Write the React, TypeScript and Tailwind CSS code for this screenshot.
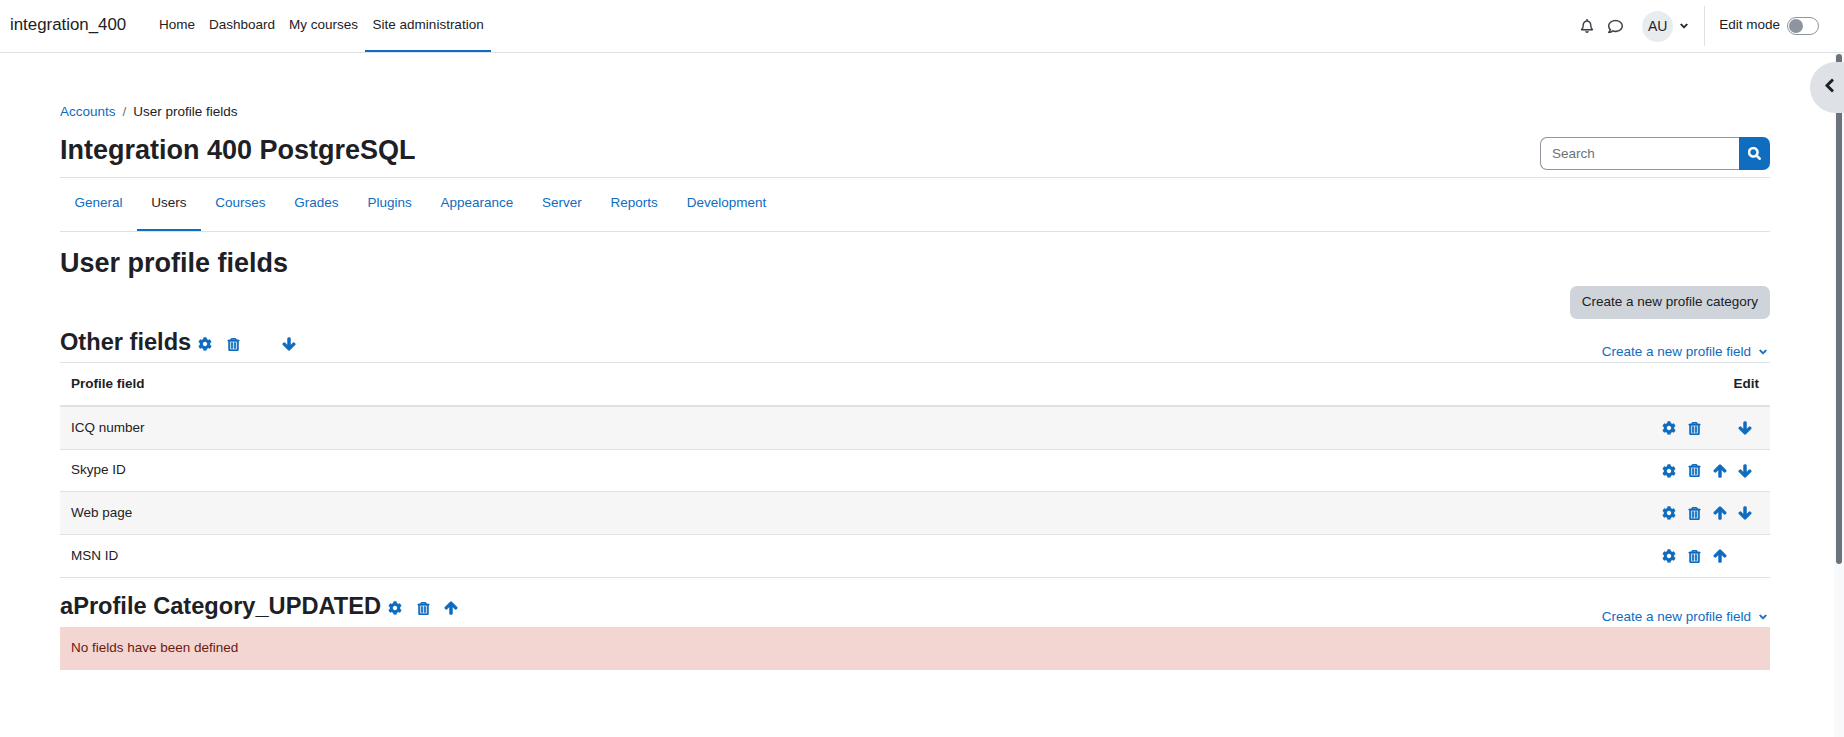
import { FaCog, FaRegTrashAlt, FaArrowUp, FaArrowDown, FaSearch, FaRegBell, FaRegComment, FaChevronDown, FaChevronLeft } from "react-icons/fa";

type Move = "up" | "down" | null;

const Gear = () => <FaCog className="text-[14px]" />;
const Trash = () => <FaRegTrashAlt className="text-[13px]" strokeWidth={30} />;
const Up = () => <FaArrowUp className="text-[14px]" strokeWidth={45} />;
const Down = () => <FaArrowDown className="text-[14px]" strokeWidth={45} />;

function ActionIcons({ up, down }: { up: boolean; down: boolean }) {
  return (
    <div className="flex items-center text-[#0f6cbf]">
      <span className="w-[25.5px] flex justify-center"><Gear /></span>
      <span className="w-[25.5px] flex justify-center"><Trash /></span>
      <span className="w-[25.5px] flex justify-center">{up ? <Up /> : null}</span>
      <span className="w-[25.5px] flex justify-center">{down ? <Down /> : null}</span>
    </div>
  );
}

function HeadIcons({ moves }: { moves: Move[] }) {
  return (
    <div className="flex items-center text-[#0f6cbf] mt-[4px]">
      <span className="w-[28px] flex justify-center"><Gear /></span>
      <span className="w-[28px] flex justify-center"><Trash /></span>
      {moves.map((m, i) => (
        <span key={i} className="w-[28px] flex justify-center">
          {m === "up" ? <Up /> : m === "down" ? <Down /> : null}
        </span>
      ))}
    </div>
  );
}

function Row({ name, up, down, shaded, h }: { name: string; up: boolean; down: boolean; shaded: boolean; h: string }) {
  return (
    <div className={`flex items-center justify-between border-b border-[#dee2e6] pl-[11px] pr-[12px] ${h} ${shaded ? "bg-[#f6f6f7]" : "bg-white"}`}>
      <span>{name}</span>
      <ActionIcons up={up} down={down} />
    </div>
  );
}

function CreateField() {
  return (
    <div className="flex items-center gap-[8px] text-[#0f6cbf] pr-[3px] leading-[20px]">
      <span>Create a new profile field</span>
      <FaChevronDown className="text-[8px]" strokeWidth={50} />
    </div>
  );
}

const nav = ["Home", "Dashboard", "My courses"];
const tabs = ["General", "Users", "Courses", "Grades", "Plugins", "Appearance", "Server", "Reports", "Development"];

export default function App() {
  return (
    <div className="relative h-[737px] w-[1844px] overflow-hidden bg-white text-[13.5px] text-[#1d2125] font-['Liberation_Sans',Arial,sans-serif] flex flex-col">
      <header className="h-[53px] shrink-0 border-b border-[#dee2e6] flex items-center pl-[10px] pr-[25px]">
        <span className="text-[16.875px] w-[142px] mb-[2px]">integration_400</span>
        <nav className="flex h-full">
          {nav.map((n) => (
            <span key={n} className="px-[7px] flex items-center h-full border-b-2 border-transparent">{n}</span>
          ))}
          <span className="px-[7.5px] flex items-center h-full border-b-2 border-[#0f6cbf]">Site administration</span>
        </nav>
        <div className="ml-auto flex items-center h-full">
          <FaRegBell className="text-[14px] text-[#3d4249]" strokeWidth={5} />
          <FaRegComment className="text-[15px] text-[#3d4249] ml-[14px]" strokeWidth={5} />
          <span className="ml-[19px] w-[31px] h-[31px] rounded-full bg-[#e9ecef] flex items-center justify-center text-[14px]">AU</span>
          <FaChevronDown className="text-[8px] ml-[7px]" strokeWidth={50} />
          <span className="ml-[16px] w-px h-[40px] bg-[#dee2e6]" />
          <span className="ml-[14px] mb-[1px]">Edit mode</span>
          <span className="ml-[7px] w-[32px] h-[18px] rounded-full border border-[#8f959e] bg-white flex items-center pl-[1px]">
            <span className="w-[14px] h-[14px] rounded-full bg-[#8f959e]" />
          </span>
        </div>
      </header>

      <div className="flex flex-1 min-h-0">
        <main className="flex-1 pl-[60px] pr-[64px] pt-[49px]">
          <div className="flex items-center gap-[7px] h-[20px]">
            <span className="text-[#0f6cbf]">Accounts</span>
            <span className="text-[#6a737b]">/</span>
            <span>User profile fields</span>
          </div>
          <div className="flex items-end justify-between h-[57px] border-b border-[#dee2e6] pb-[7px] mt-[-1px]">
            <h1 className="text-[27px] font-bold leading-[34px] mb-[3px]">Integration 400 PostgreSQL</h1>
            <div className="flex h-[33px] w-[230px]">
              <div className="flex-1 border border-[#8f959e] rounded-l-[7px] border-r-0 pl-[11px] pt-[1px] flex items-center text-[#6a737b]">Search</div>
              <div className="w-[31px] bg-[#0f6cbf] rounded-r-[7px] flex items-center justify-center text-white text-[13px]"><FaSearch strokeWidth={20} /></div>
            </div>
          </div>
          <div className="flex h-[54px] border-b border-[#dee2e6]">
            {tabs.map((t) => (
              <span
                key={t}
                className={`px-[14.4px] flex items-center h-full border-b-2 ${t === "Users" ? "text-[#1d2125] border-[#0f6cbf]" : "text-[#0f6cbf] border-transparent"}`}
              >
                {t}
              </span>
            ))}
          </div>
          <h2 className="text-[27px] font-bold leading-[32px] mt-[15px]">User profile fields</h2>
          <div className="flex justify-end mt-[7px]">
            <span className="h-[33px] px-[12px] rounded-[7px] bg-[#ced4da] flex items-center">Create a new profile category</span>
          </div>
          <div className="flex items-end justify-between h-[44px] border-b border-[#dee2e6]">
            <div className="flex items-center pb-[5px]">
              <h3 className="text-[23.625px] font-bold leading-[30px]">Other fields</h3>
              <HeadIcons moves={[null, "down"]} />
            </div>
            <CreateField />
          </div>
          <div className="flex items-center justify-between h-[44px] border-b-2 border-[#dee2e6] pl-[11px] pr-[11px] font-bold">
            <span>Profile field</span>
            <span>Edit</span>
          </div>
          <Row name="ICQ number" up={false} down shaded h="h-[43px]" />
          <Row name="Skype ID" up down shaded={false} h="h-[42px]" />
          <Row name="Web page" up down shaded h="h-[43px]" />
          <Row name="MSN ID" up down={false} shaded={false} h="h-[43px]" />
          <div className="flex items-end justify-between h-[49px]">
            <div className="flex items-center pb-[6px]">
              <h3 className="text-[23.625px] font-bold leading-[30px]">aProfile Category_UPDATED</h3>
              <HeadIcons moves={["up"]} />
            </div>
            <CreateField />
          </div>
          <div className="h-[43px] bg-[#f3d5d1] text-[#6a1b12] flex items-center pl-[11px]">No fields have been defined</div>
        </main>
        <div className="w-[10px] shrink-0 bg-[#f8f9fa] pl-[2px] pt-[1px]">
          <div className="w-[6px] h-[510px] rounded-full bg-[#6a737b]" />
        </div>
      </div>

      <div className="absolute left-[1810px] top-[62px] w-[60px] h-[51px] rounded-full bg-[#dee2e6] flex items-center pl-[12px] pb-[4px] text-[15px] text-[#1d2125]">
        <FaChevronLeft strokeWidth={30} />
      </div>
    </div>
  );
}
